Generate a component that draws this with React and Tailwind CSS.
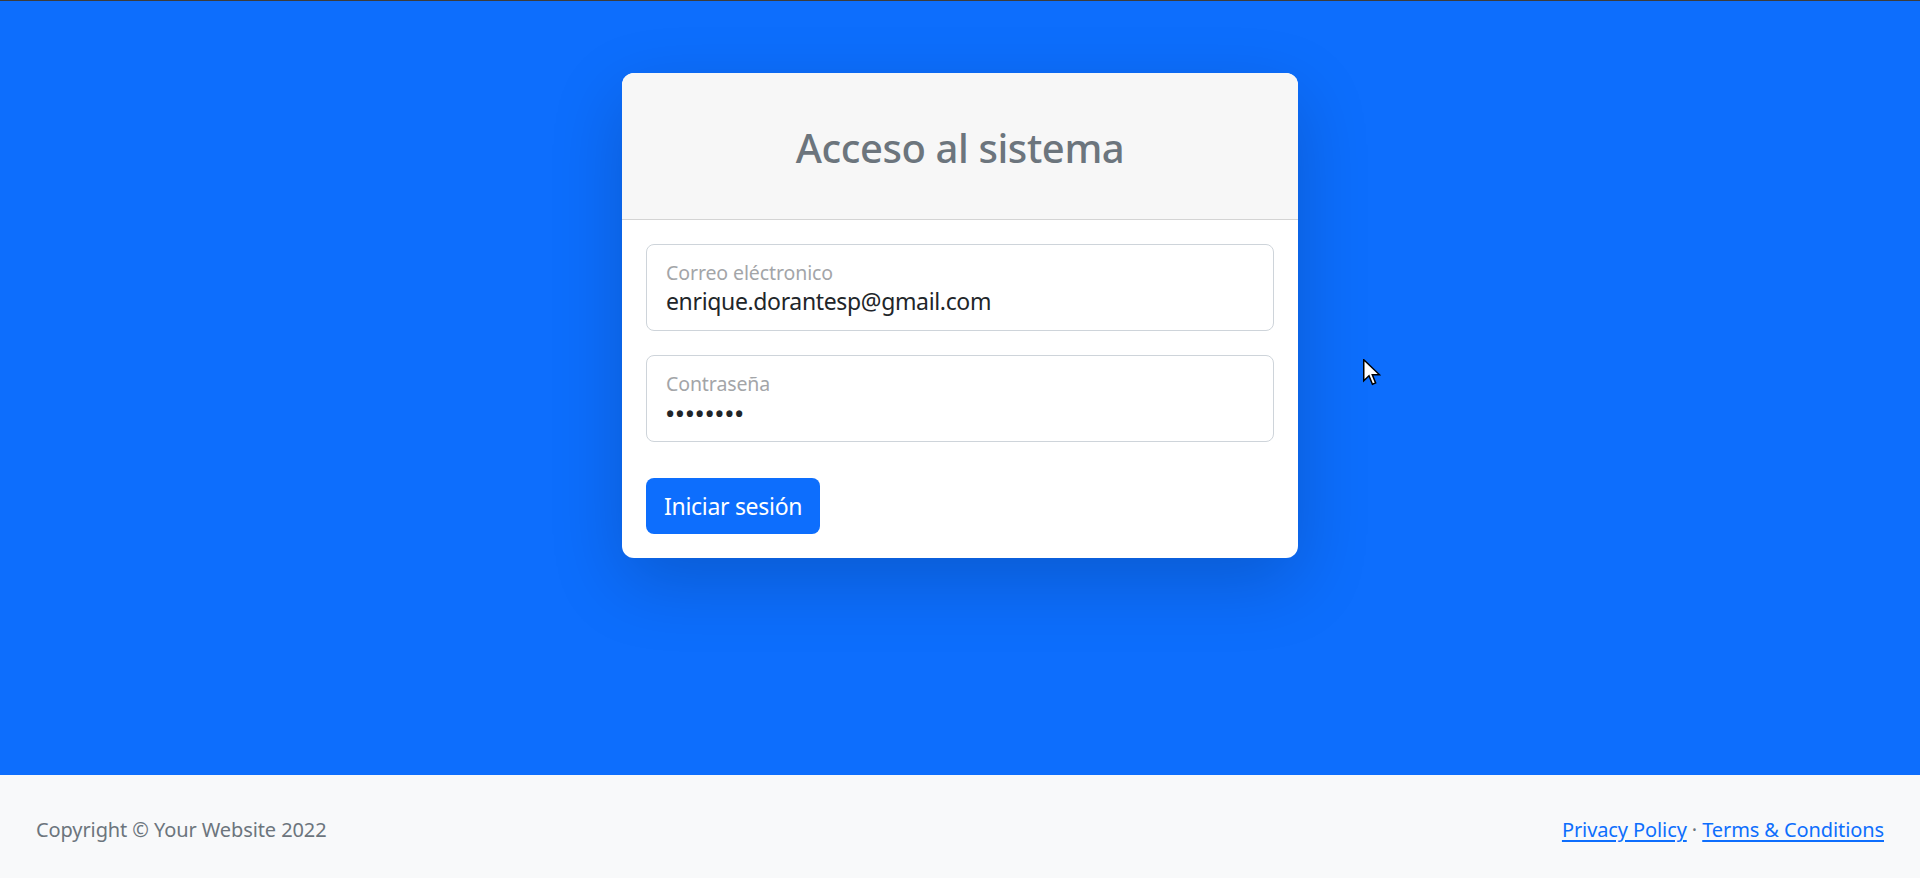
import React from 'react';

const FloatingField = ({ label, value, isPassword }) => (
    <div className="h-[87px] rounded-[8px] border border-[#ced4da] bg-white pl-[19px] pr-[18px] pt-[15px]">
        <div className="text-[19.5px] leading-[26px] tracking-[-0.1px] text-[#a3a5a8]">{label}</div>
        {isPassword ? (
            <div className="mt-[2px] text-[22px] font-bold leading-[28px] tracking-[1.6px] text-[#212529]">{value}</div>
        ) : (
            <div className="-mt-[1px] text-[23px] leading-[32px] tracking-[-0.35px] text-[#212529]">{value}</div>
        )}
    </div>
);

const Cursor = () => (
    <svg className="absolute left-[1363px] top-[359px]" width="18" height="27" viewBox="0 0 12 18">
        <path d="M0.5 0.5 L0.5 14.5 L4 11.2 L6.3 16.8 L8.4 15.9 L6.2 10.5 L11 10.5 Z" fill="#fff" stroke="#000" strokeWidth="1" strokeLinejoin="miter" />
    </svg>
);

export default function App() {
    return (
        <div className="relative min-h-screen flex flex-col font-['Noto_Sans','Open_Sans',sans-serif]">
            <div className="h-px bg-[#3c3c3c]" />

            <main className="flex-1 bg-[#0d6efd]">
                <div className="mx-auto mt-[72px] w-[676px] overflow-hidden rounded-[12px] bg-white shadow-[0_24px_72px_rgba(0,0,0,0.175)]">
                    {/* header */}
                    <div className="flex h-[147px] items-center justify-center border-b border-[#d4d4d4] bg-[#f7f7f7] pt-[4px]">
                        <h3 className="text-[40px] font-medium leading-[50px] tracking-[-0.4px] text-[#6c757d]">Acceso al sistema</h3>
                    </div>

                    {/* body */}
                    <div className="p-6">
                        <FloatingField label="Correo eléctronico" value="enrique.dorantesp@gmail.com" />
                        <div className="mt-[24px]">
                            <FloatingField label="Contraseña" value="••••••••" isPassword />
                        </div>
                        <div className="mt-[36px]">
                            <button className="h-[56px] rounded-[8px] bg-[#0d6efd] px-[18px] text-[23px] tracking-[-0.3px] text-white">
                                Iniciar sesión
                            </button>
                        </div>
                    </div>
                </div>
            </main>

            <footer className="flex h-[103px] items-center justify-between bg-[#f8f9fa] px-9 pt-[6px] text-[20px] tracking-[-0.1px] text-[#6c757d]">
                <div>Copyright © Your Website 2022</div>
                <div>
                    <a href="#" className="text-[#0d6efd] underline underline-offset-[3px]">Privacy Policy</a>
                    {' '}&middot;{' '}
                    <a href="#" className="text-[#0d6efd] underline underline-offset-[3px]">Terms &amp; Conditions</a>
                </div>
            </footer>

            <Cursor />
        </div>
    );
}
